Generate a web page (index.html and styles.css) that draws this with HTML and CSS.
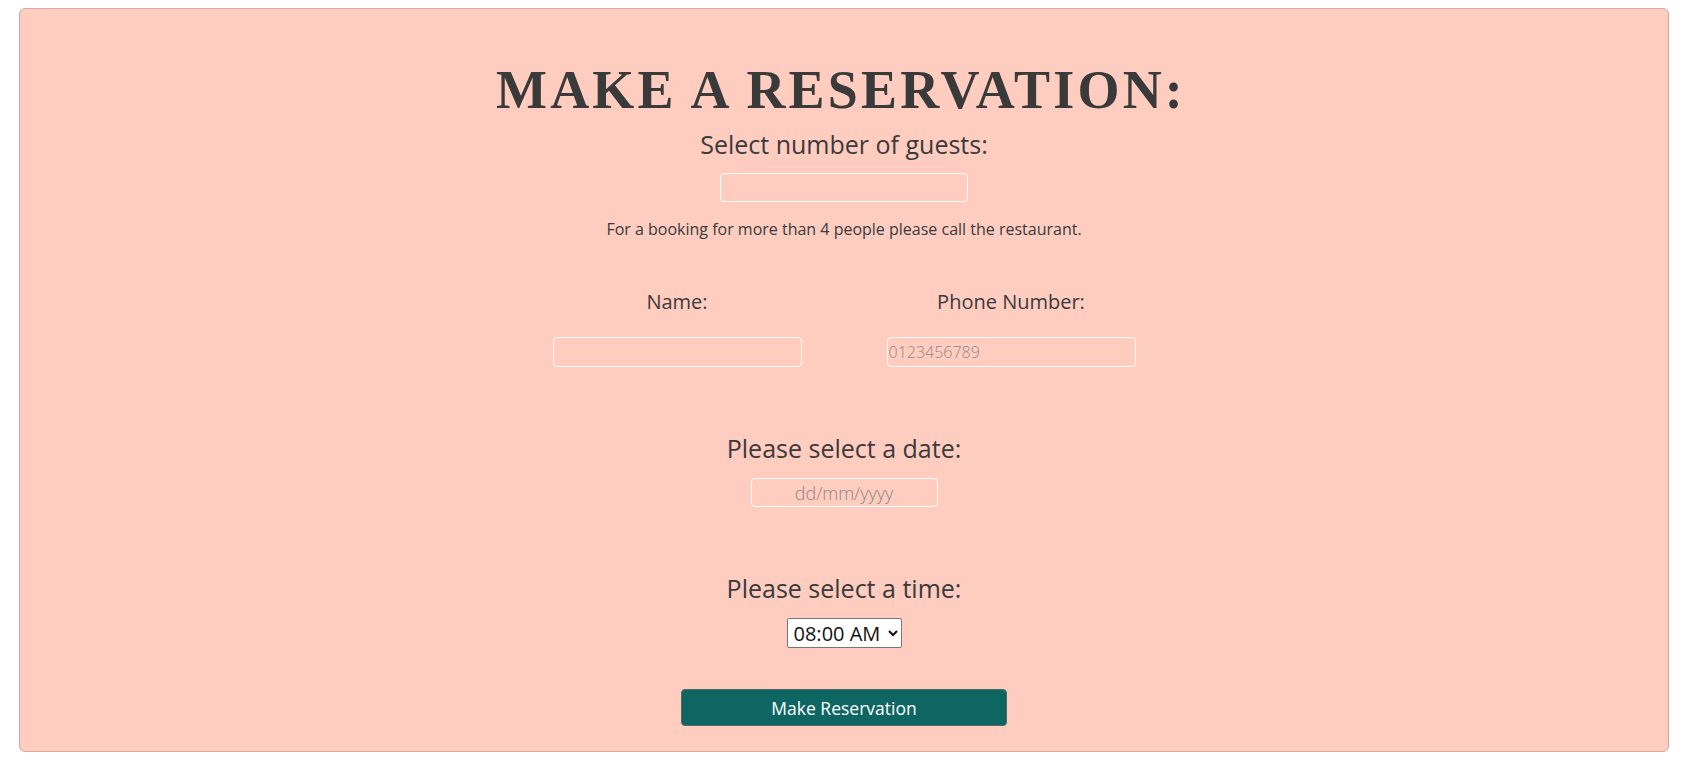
FILE: index.html
```html
<!DOCTYPE html>
<html lang="en">
<head>
<meta charset="utf-8">
<title>Make a Reservation</title>
<link rel="stylesheet" href="styles.css">
</head>
<body>
<section class="booking-card">
  <form class="booking-form">
    <h1 class="booking-title">MAKE A RESERVATION:</h1>

    <label class="label-lg guests-label" for="guests">Select number of guests:</label>
    <input class="field field-guests" id="guests" type="text">
    <p class="note">For a booking for more than 4 people please call the restaurant.</p>

    <div class="two-col">
      <div class="col">
        <label class="label-md" for="name">Name:</label>
        <input class="field field-wide" id="name" type="text">
      </div>
      <div class="col">
        <label class="label-md" for="phone">Phone Number:</label>
        <input class="field field-wide" id="phone" type="tel" placeholder="0123456789">
      </div>
    </div>

    <label class="label-lg date-label" for="date">Please select a date:</label>
    <input class="field field-date" id="date" type="text" placeholder="dd/mm/yyyy">

    <label class="label-lg time-label" for="time">Please select a time:</label>
    <select class="time-select" id="time">
      <option>08:00 AM</option>
      <option>09:00 AM</option>
      <option>10:00 AM</option>
    </select>

    <button class="submit-btn" type="button">Make Reservation</button>
  </form>
</section>
</body>
</html>
```

FILE: styles.css
```css
html, body {
  margin: 0;
  padding: 0;
  background: #ffffff;
}

body {
  font-family: "Open Sans", "Liberation Sans", sans-serif;
  color: #3b3a3c;
  padding-top: 8px;
}

.booking-card {
  margin: 0 26px 16px 19px;
  background: #fecdc0;
  border: 1px solid #d6a79b;
  border-radius: 6px;
  padding: 49px 0 25px;
}

.booking-form {
  display: flex;
  flex-direction: column;
  align-items: center;
  text-align: center;
}

.booking-title {
  margin: 0;
  font-family: "Liberation Serif", "Times New Roman", serif;
  font-weight: bold;
  font-size: 54px;
  line-height: 64px;
  letter-spacing: 3.2px;
  padding-right: 6px;
  color: #3a3a3a;
}

.label-lg {
  display: block;
  font-size: 25px;
  line-height: 32px;
  color: #3b3a3c;
}

.guests-label {
  margin-top: 6px;
}

.date-label {
  margin-top: 65px;
}

.time-label {
  margin-top: 65px;
}

.label-md {
  display: block;
  font-size: 20px;
  line-height: 28px;
  color: #3b3a3c;
}

.field {
  box-sizing: border-box;
  height: 29px;
  border: 1px solid #ffffff;
  border-radius: 4px;
  background: transparent;
  font-family: "Open Sans", "Liberation Sans", sans-serif;
  font-weight: 300;
  font-size: 16px;
  color: #3b3a3c;
  padding: 0 1px;
  outline: none;
}

.field::placeholder {
  color: #948784;
  opacity: 1;
}

.field-guests {
  width: 248px;
  margin-top: 13px;
}

.note {
  margin: 17px 0 0;
  font-size: 16px;
  line-height: 20px;
  color: #3b3a3c;
}

.two-col {
  display: flex;
  margin-top: 49px;
}

.col {
  width: 334px;
  display: flex;
  flex-direction: column;
  align-items: center;
}

.field-wide {
  width: 249px;
  height: 30px;
  margin-top: 21px;
}

.field-date {
  width: 187px;
  margin-top: 14px;
  text-align: center;
  font-size: 18px;
}

.time-select {
  box-sizing: border-box;
  margin-top: 14px;
  width: 115px;
  height: 30px;
  font-family: "Open Sans", "Liberation Sans", sans-serif;
  font-size: 20px;
  color: #111111;
  background: #ffffff;
  border: 1px solid #767676;
  border-radius: 2px;
  padding: 0 0 0 2px;
}

.submit-btn {
  box-sizing: border-box;
  margin-top: 41px;
  width: 326px;
  height: 37px;
  background: #0e6663;
  color: #ffffff;
  border: 1px solid #4f6a68;
  border-radius: 4px;
  font-family: "Open Sans", "Liberation Sans", sans-serif;
  font-size: 17.5px;
  cursor: pointer;
}
```
